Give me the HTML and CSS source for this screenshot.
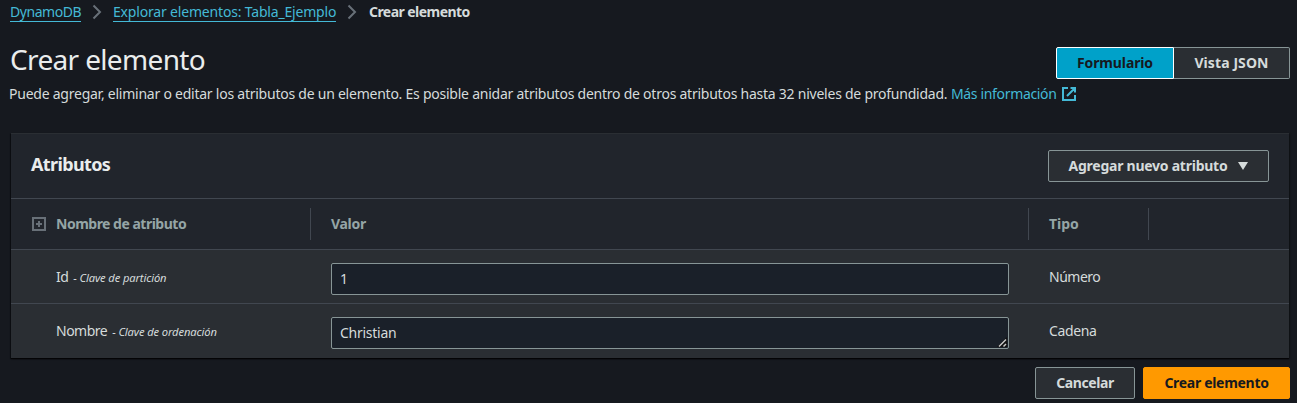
FILE: index.html
```html
<!DOCTYPE html>
<html lang="es">
<head>
<meta charset="utf-8">
<title>Crear elemento</title>
<link rel="stylesheet" href="styles.css">
</head>
<body>
<nav class="breadcrumb">
  <a class="crumb crumb-service">DynamoDB</a>
  <svg class="chevron" width="10" height="16" viewBox="0 0 10 16"><path d="M1.500 1.500 8 8 1.500 14.500"/></svg>
  <a class="crumb crumb-table">Explorar elementos: Tabla_Ejemplo</a>
  <svg class="chevron" width="10" height="16" viewBox="0 0 10 16"><path d="M1.500 1.500 8 8 1.500 14.500"/></svg>
  <span class="crumb-current">Crear elemento</span>
</nav>
<header class="page-header">
  <h1 class="title"><span>Crear elemento</span></h1>
  <div class="segmented">
    <button class="segment segment-active"><span class="t-form">Formulario</span></button>
    <button class="segment segment-json"><span class="t-json">Vista JSON</span></button>
  </div>
</header>
<p class="description"><span class="t-desc">Puede agregar, eliminar o editar los atributos de un elemento. Es posible anidar atributos dentro de otros atributos hasta 32 niveles de profundidad.</span><a class="more">Más información</a><svg class="external" width="14" height="14" viewBox="0 0 14 14"><path d="M6 1H1v12h12V8M8.500 1H13v4.500M13 1 5 9"/></svg></p>
<section class="panel">
  <div class="panel-header">
    <h2 class="panel-title"><span>Atributos</span></h2>
    <button class="button button-add"><span class="t-add">Agregar nuevo atributo</span><svg width="10" height="8" viewBox="0 0 10 8"><path d="M0 0h10L5 8z"/></svg></button>
  </div>
  <div class="row row-head">
    <div class="cell cell-name"><svg class="expand" width="14" height="14" viewBox="0 0 14 14"><path d="M1 1h12v12H1zM4 7h6M7 4v6"/></svg><span class="t-hname">Nombre de atributo</span></div>
    <div class="cell cell-value"><span class="t-hvalue">Valor</span></div>
    <div class="cell cell-type"><span class="t-htype">Tipo</span></div>
    <div class="cell cell-actions"></div>
  </div>
  <div class="row row-data row-first">
    <div class="cell cell-name"><span class="t-id">Id</span><em class="t-pk">- Clave de partición</em></div>
    <div class="cell cell-value"><div class="field"><span class="t-one">1</span></div></div>
    <div class="cell cell-type"><span class="t-num">Número</span></div>
  </div>
  <div class="row row-data row-last">
    <div class="cell cell-name"><span class="t-nom">Nombre</span><em class="t-sk">- Clave de ordenación</em></div>
    <div class="cell cell-value"><div class="field"><span class="t-chr">Christian</span><svg class="grip" width="11" height="11" viewBox="0 0 11 11"><path class="grip-shade" d="M0 10 10 0v10z"/><path class="grip-line" d="M2 9.500 9 2.500M6.500 9.500 9 7"/></svg></div></div>
    <div class="cell cell-type"><span class="t-cad">Cadena</span></div>
  </div>
</section>
<footer class="actions">
  <button class="button button-cancel"><span class="t-cancel">Cancelar</span></button>
  <button class="button button-primary"><span class="t-create">Crear elemento</span></button>
</footer>
</body>
</html>
```
FILE: styles.css
```css
* { box-sizing: border-box; }
body {
  margin: 0;
  height: 403px;
  overflow: hidden;
  background: #16191f;
  color: #d5dbdb;
  font: 14px/22px "Noto Sans", sans-serif;
  white-space: nowrap;
}
svg { fill: none; flex: none; }
button { font: inherit; color: inherit; padding: 0; font-weight: 700; }

.breadcrumb { display: flex; height: 24px; padding-left: 10px; align-items: flex-start; }
.crumb { color: #44b9d6; border-bottom: 1px solid #44b9d6; height: 22px; line-height: 24px; }
.crumb-service { width: 71px; letter-spacing: -0.45px; }
.crumb-table { width: 223px; letter-spacing: -0.18px; }
.crumb-current { font-weight: 700; line-height: 24px; letter-spacing: -0.55px; margin-left: 1px; }
.chevron { margin: 4px 11px 0; stroke: #687078; stroke-width: 2; }

.page-header { display: flex; justify-content: space-between; height: 55px; padding: 0 7px 0 10px; align-items: flex-end; }
.title { margin: 0 0 1px; font-size: 28px; font-weight: 400; line-height: 38px; color: #eaeded; letter-spacing: -0.65px; }
.segmented { display: flex; height: 32px; }
.segment { display: flex; align-items: center; justify-content: center; border: 1px solid #879596; background: #2a2e33; }
.segment-active { width: 118px; background: #00a1c9; border-color: #fff; color: #16191f; border-radius: 2px 0 0 2px; }
.segment-json { width: 116px; border-left: 0; border-radius: 0 2px 2px 0; }
.t-form { letter-spacing: -0.12px; }
.t-json { letter-spacing: 0.1px; }

.description { display: flex; align-items: center; margin: 0; height: 30px; padding-left: 9px; }
.t-desc { width: 942px; letter-spacing: -0.24px; }
.more { width: 106px; color: #44b9d6; letter-spacing: -0.34px; }
.external { margin-left: 5px; stroke: #44b9d6; stroke-width: 2; }

.panel { margin: 24px 8px 0 11px; height: 225px; background: #2a2e33; border-top: 1px solid #2a2e33; box-shadow: 0 1px 1px rgba(0,0,0,.6), 1px 1px 2px rgba(0,0,0,.35), -1px 1px 1px rgba(0,0,0,.35); }
.panel-header { display: flex; align-items: center; justify-content: space-between; height: 65px; padding: 0 20px; background: #21252c; border-bottom: 1px solid #414750; }
.panel-title { margin: 0 0 4px; font-size: 18px; line-height: 26px; color: #eaeded; letter-spacing: -0.63px; }
.button { display: flex; align-items: center; justify-content: center; height: 32px; border: 1px solid #879596; border-radius: 2px; background: #2a2e33; }
.button-add { width: 221px; gap: 11px; }
.button-add svg { fill: #d5dbdb; }
.t-add { letter-spacing: -0.25px; }

.row { display: flex; height: 54px; border-bottom: 1px solid #414750; }
.row-head { height: 51px; background: #21252c; color: #95a5a6; font-weight: 700; align-items: center; }
.row-last { border-bottom: 0; }
.cell { display: flex; align-items: center; }
.cell-name { width: 300px; padding-left: 20px; }
.cell-value { width: 718px; padding: 0 20px; }
.cell-type { width: 120px; padding-left: 20px; }
.row-head .cell { height: 32px; border-right: 1px solid #414750; }
.row-head .cell-actions { border-right: 0; }
.expand { margin: 0 10px 0 1px; stroke: #687078; stroke-width: 2; }
.t-hname { letter-spacing: -0.5px; }
.t-hvalue { letter-spacing: -0.3px; }
.row-data .cell-name { padding: 0 0 1px 45px; }
.row-data .cell-type { padding-bottom: 1px; }
.row-first .cell-name, .row-first .cell-type { padding-bottom: 0; padding-top: 1px; }
.row-data em { font-size: 11.2px; margin-left: 5px; padding-top: 2px; letter-spacing: -0.12px; }
.row-data .cell-value { padding-top: 4px; }
.t-id { letter-spacing: -0.5px; }
.t-nom, .t-num { letter-spacing: -0.5px; }
.t-cad { letter-spacing: -0.35px; }
.t-chr { letter-spacing: -0.27px; }
.field { position: relative; display: flex; align-items: center; width: 100%; height: 32px; padding-left: 8px; background: #1a2029; border: 1px solid #879596; border-radius: 2px; }
.grip { position: absolute; right: 0; bottom: 0; }
.grip-shade { fill: #111; }
.grip-line { stroke: #c8c8c8; stroke-width: 1.5; }

.actions { display: flex; justify-content: flex-end; gap: 8px; padding: 9px 7px 0 0; }
.button-cancel { width: 100px; }
.t-cancel { letter-spacing: -0.4px; }
.t-create { letter-spacing: -0.3px; }
.button-primary { width: 147px; background: #ff9900; border-color: #ff9900; color: #16191f; }
```
